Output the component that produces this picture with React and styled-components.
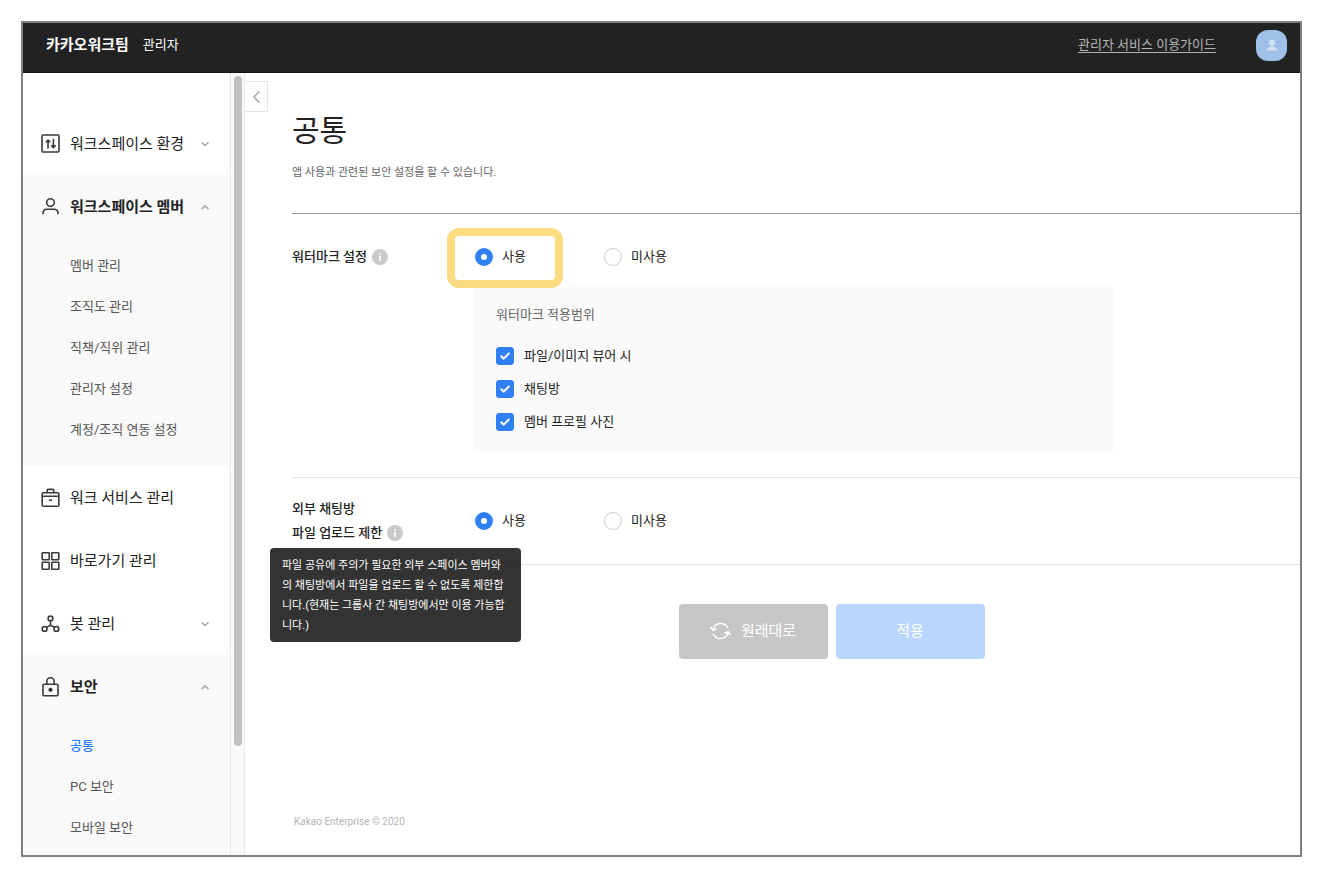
import React, { useState } from "react";
import styled, { createGlobalStyle, css } from "styled-components";

const GlobalStyle = createGlobalStyle`
  *, *::before, *::after { box-sizing: border-box; }
  body {
    margin: 0;
    background: #fff;
    color: #222;
    font-family: Roboto, "Noto Sans CJK KR", sans-serif;
    font-size: 13px;
    line-height: 20px;
  }
  button, input { font: inherit; margin: 0; }
  h1, p, ul { margin: 0; padding: 0; }
  svg { display: block; flex: none; }
`;

const Page = styled.div`
  display: flex;
  min-height: 100vh;
  padding: 21px 18px 17px 21px;
`;

const Frame = styled.div`
  flex: 1;
  min-width: 0;
  display: flex;
  flex-direction: column;
  border: 2px solid #808080;
`;

const Header = styled.header`
  display: flex;
  align-items: center;
  height: 50px;
  padding: 0 13px 5px 23px;
  background: #222;
  border-bottom: 1px solid #151515;
  color: #fff;
`;

const TeamName = styled.strong`
  font-size: 15px;
  font-weight: 700;
`;

const Role = styled.span`
  margin-left: 14px;
`;

const GuideLink = styled.a`
  margin-left: auto;
  color: #b4b4b4;
  text-decoration: underline;
  text-underline-offset: 3px;
`;

const Avatar = styled.button`
  display: flex;
  align-items: center;
  justify-content: center;
  width: 31px;
  height: 31px;
  margin-left: 40px;
  padding: 0;
  border: 0;
  border-radius: 12px;
  background: #9fc1e8;
`;

const Body = styled.div`
  flex: 1;
  display: flex;
`;

const Sidebar = styled.nav`
  display: flex;
  flex-direction: column;
  width: 207px;
  flex: none;
  padding-top: 39px;
`;

const NavGroup = styled.div`
  background: ${(p) => (p.$open ? "#f9f9f9" : "#fff")};
  ${(p) => p.$last && css`flex: 1;`}
`;

const NavButton = styled.button`
  display: flex;
  align-items: center;
  width: 100%;
  height: 63px;
  padding: 0 19px 0 17px;
  border: 0;
  background: none;
  color: #222;
  font-size: 15px;
  font-weight: ${(p) => (p.$open ? 700 : 400)};
  text-align: left;
  white-space: nowrap;
`;

const NavText = styled.span`
  flex: 1;
  margin-left: 9px;
`;

const SubList = styled.ul`
  list-style: none;
  padding: 7px 0 ${(p) => (p.$last ? "0" : "16px")};
`;

const SubLink = styled.a`
  display: flex;
  align-items: center;
  height: 41px;
  padding-left: 47px;
  color: ${(p) => (p.$active ? "#2f80f7" : "#555")};
  font-weight: ${(p) => (p.$active ? 500 : 400)};
  text-decoration: none;
`;

const ScrollTrack = styled.div`
  flex: none;
  width: 15px;
  padding: 3px 2px 0 3px;
  background: #fafafa;
  border-left: 1px solid #e8e8e8;
  border-right: 1px solid #e8e8e8;
`;

const ScrollThumb = styled.div`
  width: 8px;
  height: 86%;
  border-radius: 4px;
  background: #c1c1c1;
`;

const CollapseButton = styled.button`
  display: flex;
  align-items: center;
  justify-content: center;
  flex: none;
  width: 23px;
  height: 31px;
  margin-top: 8px;
  padding: 0;
  border: 1px solid #e5e5e5;
  border-left: 0;
  background: #fff;
`;

const Main = styled.main`
  flex: 1;
  min-width: 0;
  display: flex;
  flex-direction: column;
  padding: 38px 0 23px 24px;
`;

const Title = styled.h1`
  font-size: 30px;
  font-weight: 400;
  line-height: 40px;
`;

const Description = styled.p`
  margin-top: 12px;
  padding-bottom: 30px;
  border-bottom: 1px solid #999;
  color: #666;
  font-size: 11px;
`;

const Setting = styled.section`
  display: flex;
  align-items: flex-start;
  padding: ${(p) => (p.$compact ? "19px 0" : "31px 0 24px")};
  border-bottom: 1px solid #e1e1e1;
`;

const SettingLabel = styled.div`
  position: relative;
  flex: none;
  width: 181px;
  font-weight: 500;
  line-height: 24px;
`;

const LabelLine = styled.div`
  display: flex;
  align-items: center;
`;

const InfoButton = styled.button`
  display: flex;
  margin-left: 5px;
  padding: 0;
  border: 0;
  background: none;
`;

const Tooltip = styled.div`
  position: absolute;
  z-index: 2;
  top: 51px;
  left: -22px;
  width: 251px;
  padding: 8px 12px 6px;
  border-radius: 4px;
  background: rgba(44, 44, 44, 0.97);
  color: #fff;
  font-size: 11px;
  font-weight: 400;
  line-height: 20px;
`;

const SettingBody = styled.div`
  flex: 1;
  min-width: 0;
`;

const RadioRow = styled.div`
  display: flex;
  align-items: center;
  height: ${(p) => (p.$tall ? "48px" : "24px")};
  padding-left: 2px;
`;

const RadioLabel = styled.label`
  position: relative;
  display: flex;
  align-items: center;
  gap: 9px;
  width: 129px;
`;

const Radio = styled.input.attrs({ type: "radio" })`
  appearance: none;
  width: 18px;
  height: 18px;
  border: 1px solid #ccc;
  border-radius: 50%;
  background: #fff;
  &:checked {
    border: 6px solid #2f80f7;
  }
`;

const Highlight = styled.span`
  position: absolute;
  z-index: 1;
  top: -19px;
  left: -28px;
  width: 116px;
  height: 60px;
  border: 8px solid #fbdc82;
  border-radius: 12px;
  pointer-events: none;
`;

const ScopePanel = styled.fieldset`
  max-width: 640px;
  min-width: 0;
  margin: 16px 0 0;
  padding: 20px 23px 15px;
  border: 0;
  border-radius: 4px;
  background: #fafafa;
`;

const ScopeTitle = styled.p`
  margin-bottom: 14px;
  color: #666;
`;

const CheckLabel = styled.label`
  display: flex;
  align-items: center;
  gap: 10px;
  height: 33px;
`;

const CheckBox = styled.span`
  position: relative;
  display: flex;
  svg {
    position: absolute;
    inset: 0;
    pointer-events: none;
  }
`;

const CheckInput = styled.input.attrs({ type: "checkbox" })`
  appearance: none;
  width: 18px;
  height: 18px;
  border: 1px solid #ccc;
  border-radius: 3px;
  background: #fff;
  &:checked {
    border-color: #2f80f7;
    background: #2f80f7;
  }
`;

const Actions = styled.div`
  display: flex;
  justify-content: center;
  gap: 8px;
  padding: 39px 0 40px 71px;
`;

const ActionButton = styled.button`
  display: flex;
  align-items: center;
  justify-content: center;
  gap: 10px;
  width: 149px;
  height: 55px;
  padding: 0 0 2px;
  border: 0;
  border-radius: 4px;
  background: ${(p) => (p.$primary ? "#b9d7fc" : "#c6c6c6")};
  color: #fff;
  font-size: 15px;
`;

const Footer = styled.footer`
  margin-top: auto;
  padding-left: 2px;
  color: #b4b4b4;
  font-size: 10px;
`;

const NavIcon = ({ children }) => (
  <svg width="21" height="22" viewBox="0 0 21 22" fill="none" stroke="#3a3a3c" strokeWidth="1.6" strokeLinejoin="round">
    {children}
  </svg>
);

const icons = {
  env: (
    <NavIcon>
      <rect x="2" y="2" width="17" height="17" rx="1" />
      <path d="M8 15.500V7.500M5.800 9.300 8 7l2.200 2.300M13.400 6v8.300M11.200 12.300l2.200 2.300 2.200-2.300" />
    </NavIcon>
  ),
  member: (
    <NavIcon>
      <circle cx="10.500" cy="6.600" r="3.800" />
      <path d="M3 18.200v-.8c0-2.600 1.700-4.200 4.200-4.200h6.600c2.500 0 4.200 1.600 4.200 4.200v.8" />
    </NavIcon>
  ),
  service: (
    <NavIcon>
      <path d="M3.200 5.700h14.600q1 0 1 1v11.600q0 1-1 1H3.200q-1 0-1-1V6.700q0-1 1-1ZM7.200 5.500V3.200q0-.8.8-.8h5q.8 0 .8.8v2.300M2.400 9.300h16.200" />
      <path d="M9 13.200h3" />
    </NavIcon>
  ),
  shortcut: (
    <NavIcon>
      <rect x="2.200" y="2.700" width="7" height="7" rx="0.500" />
      <rect x="11.800" y="2.700" width="7" height="7" rx="0.500" />
      <rect x="2.200" y="12.300" width="7" height="7" rx="0.500" />
      <rect x="11.800" y="12.300" width="7" height="7" rx="0.500" />
    </NavIcon>
  ),
  bot: (
    <NavIcon>
      <circle cx="10.500" cy="5.400" r="2.400" />
      <circle cx="4.600" cy="15.900" r="2.400" />
      <circle cx="16.400" cy="15.900" r="2.400" />
      <path d="M10.500 8v4.200M6.600 14.400l3.900-2.200 3.900 2.200" />
    </NavIcon>
  ),
  security: (
    <NavIcon>
      <rect x="3" y="8.200" width="15" height="11.500" rx="1" />
      <path d="M6.800 8V5.500a3.700 3.700 0 0 1 7.400 0V8" />
      <circle cx="10.500" cy="13.800" r="1.800" fill="#222" strokeWidth="0.600" />
    </NavIcon>
  ),
};

const Chevron = ({ up }) => (
  <svg width="12" height="12" viewBox="0 0 12 12" fill="none" stroke="#aaa" strokeWidth="1.600">
    <path d={up ? "M2.500 8 6 4.800 9.500 8" : "M2.500 4.300 6 7.500l3.500-3.200"} />
  </svg>
);

const menu = [
  { icon: "env", text: "워크스페이스 환경", fold: true },
  {
    icon: "member",
    text: "워크스페이스 멤버",
    fold: true,
    items: ["멤버 관리", "조직도 관리", "직책/직위 관리", "관리자 설정", "계정/조직 연동 설정"],
  },
  { icon: "service", text: "워크 서비스 관리" },
  { icon: "shortcut", text: "바로가기 관리" },
  { icon: "bot", text: "봇 관리", fold: true },
  { icon: "security", text: "보안", fold: true, items: ["공통", "PC 보안", "모바일 보안"] },
];

const Info = () => (
  <InfoButton type="button" aria-label="도움말">
    <svg width="16" height="16" viewBox="0 0 16 16">
      <circle cx="8" cy="8" r="8" fill="#cacaca" />
      <path d="M7.200 4h1.600v1.500H7.200zM7.200 6.700h1.600V12H7.200z" fill="#fff" />
    </svg>
  </InfoButton>
);

const UseRadios = ({ name, tall, highlighted }) => {
  const [used, setUsed] = useState(true);
  return (
    <RadioRow $tall={tall}>
      <RadioLabel>
        <Radio name={name} checked={used} onChange={() => setUsed(true)} />
        사용
        {highlighted && <Highlight />}
      </RadioLabel>
      <RadioLabel>
        <Radio name={name} checked={!used} onChange={() => setUsed(false)} />
        미사용
      </RadioLabel>
    </RadioRow>
  );
};

const ScopeCheck = ({ text }) => (
  <CheckLabel>
    <CheckBox>
      <CheckInput defaultChecked />
      <svg width="18" height="18" viewBox="0 0 18 18" fill="none" stroke="#fff" strokeWidth="2">
        <path d="m4.800 8.800 2.900 2.900 5.600-5.700" />
      </svg>
    </CheckBox>
    {text}
  </CheckLabel>
);

export default function App() {
  return (
    <>
      <GlobalStyle />
      <Page>
        <Frame>
          <Header>
            <TeamName>카카오워크팀</TeamName>
            <Role>관리자</Role>
            <GuideLink href="#guide">관리자 서비스 이용가이드</GuideLink>
            <Avatar type="button" aria-label="내 계정">
              <svg width="12" height="12" viewBox="0 0 12 12" fill="#d0e1f5">
                <circle cx="6" cy="3.500" r="3" />
                <path d="M4.900 6h2.200v1.600H4.900zM1 11.500C1 9 3 7.600 6 7.600s5 1.400 5 3.900Z" />
              </svg>
            </Avatar>
          </Header>
          <Body>
            <Sidebar>
              {menu.map(({ icon, text, fold, items }, i) => {
                const last = i === menu.length - 1;
                return (
                  <NavGroup key={text} $open={!!items} $last={last}>
                    <NavButton type="button" $open={!!items}>
                      {icons[icon]}
                      <NavText>{text}</NavText>
                      {fold && <Chevron up={!!items} />}
                    </NavButton>
                    {items && (
                      <SubList $last={last}>
                        {items.map((item) => (
                          <li key={item}>
                            <SubLink href="#menu" $active={item === "공통"}>
                              {item}
                            </SubLink>
                          </li>
                        ))}
                      </SubList>
                    )}
                  </NavGroup>
                );
              })}
            </Sidebar>
            <ScrollTrack>
              <ScrollThumb />
            </ScrollTrack>
            <CollapseButton type="button" aria-label="메뉴 접기">
              <svg width="12" height="14" viewBox="0 0 12 14" fill="none" stroke="#aaa" strokeWidth="1.600">
                <path d="M9.500 1.500 4 7l5.500 5.500" />
              </svg>
            </CollapseButton>
            <Main>
              <Title>공통</Title>
              <Description>앱 사용과 관련된 보안 설정을 할 수 있습니다.</Description>
              <Setting>
                <SettingLabel>
                  <LabelLine>
                    워터마크 설정
                    <Info />
                  </LabelLine>
                </SettingLabel>
                <SettingBody>
                  <UseRadios name="watermark" highlighted />
                  <ScopePanel aria-label="워터마크 적용범위">
                    <ScopeTitle>워터마크 적용범위</ScopeTitle>
                    <ScopeCheck text="파일/이미지 뷰어 시" />
                    <ScopeCheck text="채팅방" />
                    <ScopeCheck text="멤버 프로필 사진" />
                  </ScopePanel>
                </SettingBody>
              </Setting>
              <Setting $compact>
                <SettingLabel>
                  <LabelLine>외부 채팅방</LabelLine>
                  <LabelLine>
                    파일 업로드 제한
                    <Info />
                  </LabelLine>
                  <Tooltip role="tooltip">
                    파일 공유에 주의가 필요한 외부 스페이스 멤버와의 채팅방에서 파일을 업로드 할 수 없도록 제한합니다.(현재는
                    그룹사 간 채팅방에서만 이용 가능합니다.)
                  </Tooltip>
                </SettingLabel>
                <SettingBody>
                  <UseRadios name="upload" tall />
                </SettingBody>
              </Setting>
              <Actions>
                <ActionButton type="button">
                  <svg width="21" height="20" viewBox="0 0 21 20" fill="none" stroke="#fff" strokeWidth="1.500">
                    <path d="M3 9A7.800 7.800 0 0 1 17.800 7M18 11A7.800 7.800 0 0 1 3.200 13M.6 6l2.300 3.400L6.600 7.600M20.400 14l-2.300-3.400-3.700 1.800" />
                  </svg>
                  원래대로
                </ActionButton>
                <ActionButton type="button" $primary>
                  적용
                </ActionButton>
              </Actions>
              <Footer>Kakao Enterprise © 2020</Footer>
            </Main>
          </Body>
        </Frame>
      </Page>
    </>
  );
}
